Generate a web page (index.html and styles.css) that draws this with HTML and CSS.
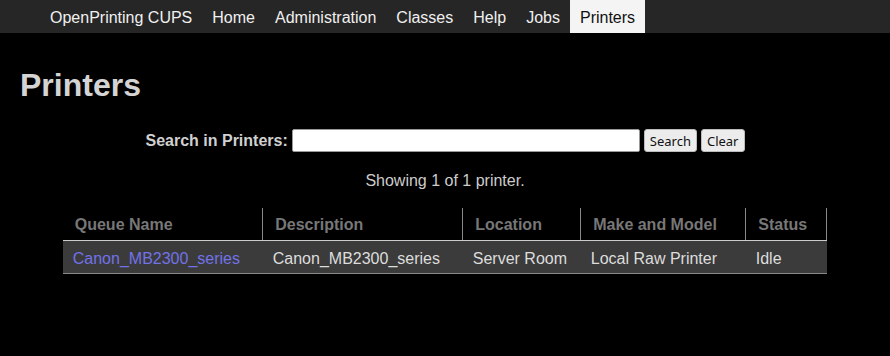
FILE: index.html
```html
<!DOCTYPE html>
<html lang="en">
<head>
    <meta charset="UTF-8">
    <meta name="viewport" content="width=device-width, initial-scale=1.0">
    <title>Printers - CUPS</title>
    <link rel="stylesheet" href="styles.css">
</head>
<body>
    <nav class="header">
        <a href="#">OpenPrinting CUPS</a>
        <a href="#">Home</a>
        <a href="#">Administration</a>
        <a href="#">Classes</a>
        <a href="#">Help</a>
        <a href="#">Jobs</a>
        <a href="#" class="active">Printers</a>
    </nav>

    <div class="body">
        <h1>Printers</h1>

        <form class="search" action="#">
            <label for="query">Search in Printers:</label>
            <input type="search" id="query" name="QUERY">
            <button type="submit">Search</button>
            <button type="reset">Clear</button>
        </form>

        <p class="count">Showing 1 of 1 printer.</p>

        <table class="list">
            <colgroup>
                <col class="c1">
                <col class="c2">
                <col class="c3">
                <col class="c4">
                <col class="c5">
            </colgroup>
            <thead>
                <tr>
                    <th>Queue Name</th>
                    <th>Description</th>
                    <th>Location</th>
                    <th>Make and Model</th>
                    <th>Status</th>
                </tr>
            </thead>
            <tbody>
                <tr>
                    <td><a href="#">Canon_MB2300_series</a></td>
                    <td>Canon_MB2300_series</td>
                    <td>Server Room</td>
                    <td>Local Raw Printer</td>
                    <td>Idle</td>
                </tr>
            </tbody>
        </table>
    </div>
</body>
</html>
```

FILE: styles.css
```css
body {
    margin: 0;
    background-color: #000;
    color: #ccc;
    font-family: "Liberation Sans", Arial, sans-serif;
    font-size: 16px;
}
.header {
    display: flex;
    height: 33px;
    padding-left: 40px;
    background-color: #262626;
}
.header a {
    display: block;
    padding: 0 10px;
    line-height: 35px;
    color: #f0f0f0;
    text-decoration: none;
}
.header a.active {
    background-color: #f4f4f4;
    color: #111;
}
.body {
    padding: 0 20px;
}
h1 {
    margin: 32px 0 0;
    font-size: 32px;
    line-height: 40px;
    color: #d4d4d4;
}
.search {
    display: flex;
    justify-content: center;
    align-items: center;
    gap: 4px;
    margin-top: 24px;
}
.search label {
    font-weight: bold;
    color: #d0d0d0;
}
.search input {
    box-sizing: border-box;
    width: 348px;
    height: 23px;
    border: 1px solid #999;
    border-radius: 2px;
    background-color: #fff;
}
.search button {
    height: 23px;
    padding: 0 5px;
    border: 1px solid #bbb;
    border-radius: 3px;
    background-color: #ececec;
    color: #111;
    font-family: "Noto Sans", sans-serif;
    font-size: 13px;
}
.count {
    margin: 20px 0 0;
    text-align: center;
    color: #ccc;
}
.list {
    width: 764px;
    margin: 18px auto 0;
    table-layout: fixed;
    border-collapse: collapse;
}
.c1 { width: 200px; }
.c2 { width: 200px; }
.c3 { width: 118px; }
.c4 { width: 165px; }
.c5 { width: 81px; }
.list th {
    height: 31px;
    padding: 1px 0 0 12px;
    text-align: left;
    color: #777;
    border-right: 1px solid #888;
    border-bottom: 1px solid #ccc;
}
.list td {
    height: 29px;
    padding: 3px 0 0 10px;
    background-color: #3b3b3b;
    color: #ddd;
    border-bottom: 1px solid #888;
    white-space: nowrap;
}
.list td a {
    color: #7272e8;
    text-decoration: none;
}
```
